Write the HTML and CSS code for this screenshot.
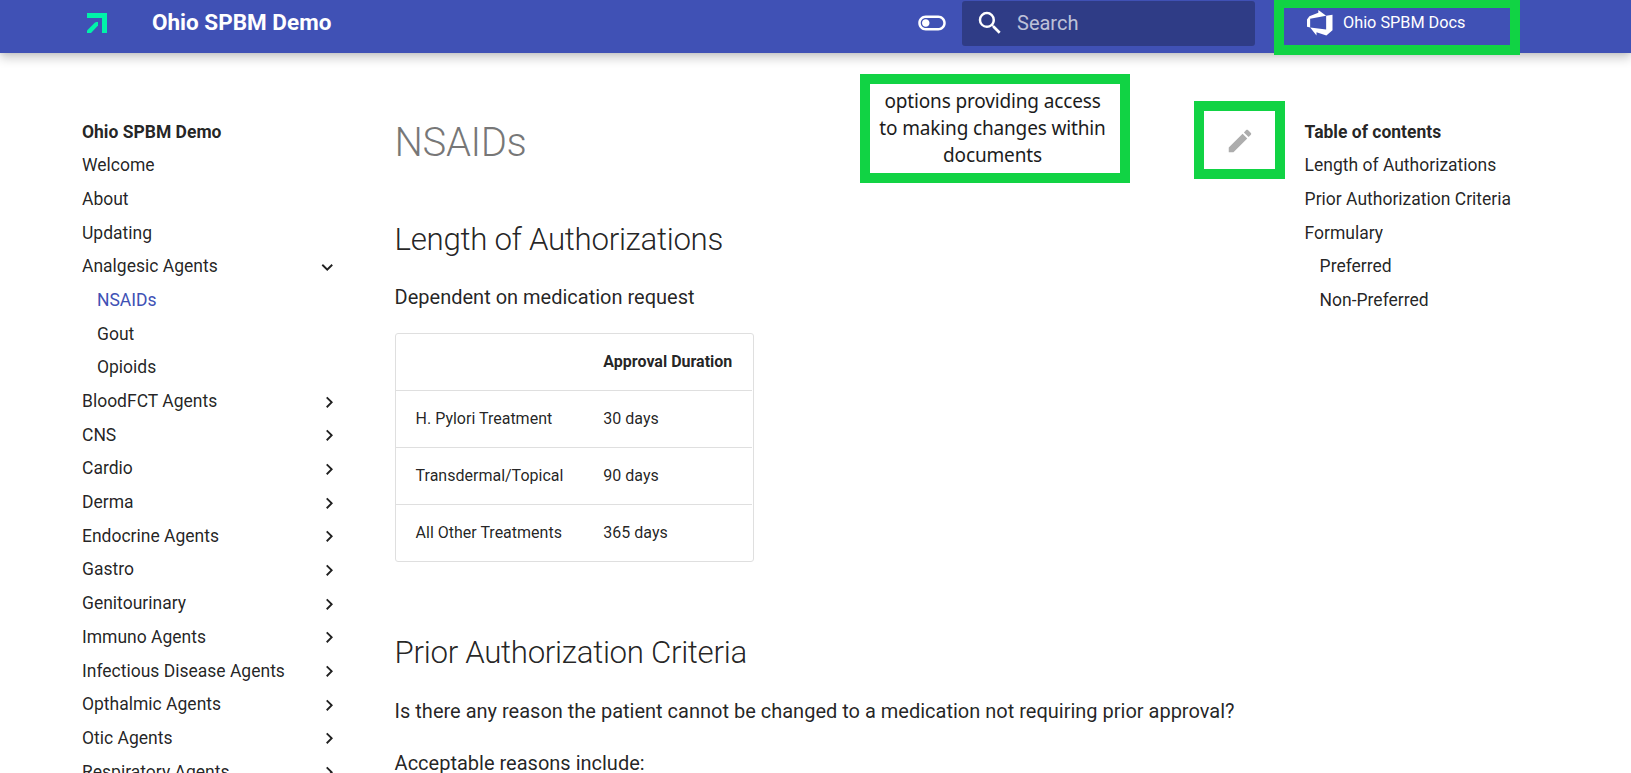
FILE: index.html
```
<!DOCTYPE html>
<html lang="en">
<head>
<meta charset="utf-8">
<title>NSAIDs - Ohio SPBM Demo</title>
<link rel="stylesheet" href="styles.css">
</head>
<body>
<svg class="defs" width="0" height="0"><defs><symbol id="chev" viewBox="0 0 24 24"><path d="M8.59 16.58 13.17 12 8.59 7.41 10 6l6 6-6 6-1.41-1.42Z"/></symbol></defs></svg>
<header class="header">
  <a class="logo"><svg viewBox="0 0 20 20"><path d="M0 0H20V20H15V5H0Z"/><path d="M9.500 9H11V12.500L4 20H0V17.500L8 9.500Z"/></svg></a>
  <div class="title">Ohio SPBM Demo</div>
  <svg class="icon toggle" viewBox="0 0 24 24"><path d="M17 6H7c-3.310 0-6 2.690-6 6s2.690 6 6 6h10c3.310 0 6-2.690 6-6s-2.690-6-6-6zm0 10H7c-2.210 0-4-1.790-4-4s1.790-4 4-4h10c2.210 0 4 1.790 4 4s-1.790 4-4 4zM7 9c-1.660 0-3 1.340-3 3s1.340 3 3 3 3-1.340 3-3-1.340-3-3-3z"/></svg>
  <div class="search">
    <svg class="icon" viewBox="0 0 24 24"><path d="M9.500 3A6.500 6.500 0 0 1 16 9.500c0 1.610-.590 3.090-1.560 4.230l.270.270h.790l5 5-1.500 1.500-5-5v-.790l-.270-.270A6.516 6.516 0 0 1 9.500 16 6.500 6.500 0 0 1 3 9.500 6.500 6.500 0 0 1 9.500 3m0 2C7 5 5 7 5 9.500S7 14 9.500 14 14 12 14 9.500 12 5 9.500 5Z"/></svg>
    <span>Search</span>
  </div>
  <a class="source">
    <svg viewBox="0 0 24 24"><path d="M0 8.877 2.247 5.910l8.405-3.416V.022l7.370 5.393L2.966 8.338v8.225L0 15.707V8.877zm24-4.450v14.651l-5.753 4.900-9.303-3.057v3.056l-5.978-7.416 15.057 1.798V5.415L24 4.427z"/></svg>
    <span>Ohio SPBM Docs</span>
  </a>
</header>
<div class="main">
  <nav class="nav">
    <div class="row head">Ohio SPBM Demo</div>
    <div class="row">Welcome</div>
    <div class="row">About</div>
    <div class="row">Updating</div>
    <div class="row">Analgesic Agents<svg class="open"><use href="#chev"/></svg></div>
    <div class="row sub active">NSAIDs</div>
    <div class="row sub">Gout</div>
    <div class="row sub">Opioids</div>
    <div class="row">BloodFCT Agents<svg><use href="#chev"/></svg></div>
    <div class="row">CNS<svg><use href="#chev"/></svg></div>
    <div class="row">Cardio<svg><use href="#chev"/></svg></div>
    <div class="row">Derma<svg><use href="#chev"/></svg></div>
    <div class="row">Endocrine Agents<svg><use href="#chev"/></svg></div>
    <div class="row">Gastro<svg><use href="#chev"/></svg></div>
    <div class="row">Genitourinary<svg><use href="#chev"/></svg></div>
    <div class="row">Immuno Agents<svg><use href="#chev"/></svg></div>
    <div class="row">Infectious Disease Agents<svg><use href="#chev"/></svg></div>
    <div class="row">Opthalmic Agents<svg><use href="#chev"/></svg></div>
    <div class="row">Otic Agents<svg><use href="#chev"/></svg></div>
    <div class="row">Respiratory Agents<svg><use href="#chev"/></svg></div>
  </nav>
  <article class="content">
    <div class="top">
      <h1>NSAIDs</h1>
      <svg class="edit" viewBox="0 0 24 24"><path d="M20.710 7.040c.390-.390.390-1.040 0-1.410l-2.340-2.340c-.370-.390-1.020-.390-1.410 0l-1.840 1.830 3.750 3.750M3 17.250V21h3.750L17.810 9.930l-3.750-3.750L3 17.250Z"/></svg>
    </div>
    <h2>Length of Authorizations</h2>
    <p>Dependent on medication request</p>
    <table>
      <thead><tr><th></th><th>Approval Duration</th></tr></thead>
      <tbody>
        <tr><td>H. Pylori Treatment</td><td>30 days</td></tr>
        <tr><td>Transdermal/Topical</td><td>90 days</td></tr>
        <tr><td>All Other Treatments</td><td>365 days</td></tr>
      </tbody>
    </table>
    <h2 class="second">Prior Authorization Criteria</h2>
    <p>Is there any reason the patient cannot be changed to a medication not requiring prior approval?</p>
    <p>Acceptable reasons include:</p>
  </article>
  <nav class="toc">
    <div class="row head">Table of contents</div>
    <div class="row">Length of Authorizations</div>
    <div class="row">Prior Authorization Criteria</div>
    <div class="row">Formulary</div>
    <div class="row sub">Preferred</div>
    <div class="row sub">Non-Preferred</div>
  </nav>
</div>
<div class="mark mark-docs"></div>
<div class="mark mark-edit"></div>
<div class="mark mark-note"><div>options providing access</div><div>to making changes within</div><div>documents</div></div>
</body>
</html>
```
FILE: styles.css
```
* { box-sizing: border-box; }
body {
  margin: 0;
  width: 1631px;
  height: 773px;
  overflow: hidden;
  position: relative;
  background: #fff;
  color: rgba(0, 0, 0, .87);
  font-family: Roboto, "Liberation Sans", sans-serif;
}
.defs { display: none; }
.header {
  height: 53px;
  padding: 0 0 7px 87px;
  display: flex;
  align-items: center;
  background: #4051b5;
  color: #fff;
  box-shadow: 0 0 5px rgba(0, 0, 0, .1), 0 5px 10px rgba(0, 0, 0, .2);
}
.logo { width: 65px; display: flex; }
.logo svg { width: 20px; height: 20px; fill: #00f2a9; }
.title { width: 765px; font-size: 22.5px; font-weight: 700; line-height: 44px; padding-bottom: 2px; }
.icon { width: 30px; height: 30px; fill: #fff; flex: none; }
.search {
  width: 293px;
  height: 45px;
  margin: 1px 0 0 15px;
  padding: 0 0 2px 13px;
  display: flex;
  align-items: center;
  border-radius: 3px;
  background: rgba(0, 0, 0, .26);
  font-size: 20px;
  color: rgba(255, 255, 255, .7);
}
.search span { margin-left: 12px; }
.source { display: flex; align-items: center; margin-left: 52px; font-size: 16.25px; }
.source svg { width: 25.5px; height: 25.5px; fill: #fff; margin-right: 10.5px; }
.source span { padding-bottom: 2px; }
.main { display: flex; padding-top: 67.5px; }
.nav { width: 394.6px; padding-left: 82px; flex: none; }
.nav, .toc { font-size: 17.5px; }
.nav .row { width: 258px; }
.row {
  height: 33.69px;
  line-height: 22.75px;
  display: flex;
  justify-content: space-between;
  white-space: nowrap;
}
.row svg { width: 22.5px; height: 22.5px; margin-top: .5px; fill: rgba(0, 0, 0, .87); }
.row svg.open { transform: rotate(90deg); margin-right: 1.5px; }
.head { font-weight: 700; }
.sub { padding-left: 15px; }
.active { color: #4051b5; }
.content { width: 910px; flex: none; }
.top { display: flex; justify-content: space-between; padding-right: 50px; height: 92px; }
h1 { margin: -3.5px 0 0; font-size: 40px; line-height: 52px; font-weight: 300; letter-spacing: -.4px; color: rgba(0, 0, 0, .54); }
.edit { width: 30px; height: 30px; margin-top: 5.5px; fill: #adadad; }
h2 { margin: 5.5px 0 19px; font-size: 31.25px; line-height: 43.75px; font-weight: 300; letter-spacing: -.3125px; }
p { margin: 0 0 20px; font-size: 20px; line-height: 32px; }
table {
  width: 359px;
  padding-right: 1px;
  border: 1px solid #dfdfdf;
  border-radius: 3px;
  border-spacing: 0;
  font-size: 16px;
  line-height: 26px;
  white-space: nowrap;
}
th, td { padding: 15px 20px; text-align: left; height: 57px; }
th { height: 56px; padding: 15.5px 18px 14.5px 20px; }
td { border-top: 1px solid #dfdfdf; }
th:first-child, td:first-child { width: 187.5px; }
h2.second { margin-top: 69px; margin-bottom: 20px; }
.toc { flex: none; }
.mark { position: absolute; border: 10px solid #11d344; }
.mark-docs { left: 1274px; top: -2px; width: 246px; height: 57px; }
.mark-edit { left: 1194px; top: 101px; width: 91px; height: 78px; }
.mark-note {
  left: 860px;
  top: 74px;
  width: 270px;
  height: 109px;
  padding: 4px 5px 0 0;
  background: #fff;
  color: #1c1c1c;
  text-align: center;
  font-family: "Noto Sans", sans-serif;
  font-size: 19px;
  letter-spacing: -.15px;
  line-height: 27px;
}
```
